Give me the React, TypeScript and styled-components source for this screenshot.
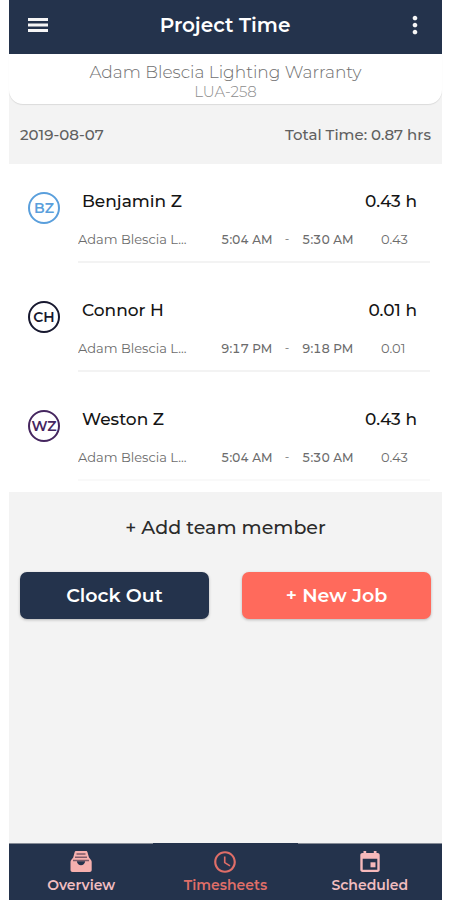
import React from "react";
import styled, { createGlobalStyle } from "styled-components";
import { MdAccessTime, MdMoreVert } from "react-icons/md";

const GlobalStyle = createGlobalStyle`
  * { box-sizing: border-box; }
  body {
    margin: 0;
    background: #ffffff;
    font-family: Montserrat, Inter, sans-serif;
    color: #141414;
  }
  button { font-family: inherit; cursor: pointer; }
  h1, h2, p, ul { margin: 0; padding: 0; font-weight: inherit; }
`;

const Screen = styled.div`
  display: flex;
  flex-direction: column;
  min-height: 100vh;
  margin: 0 8px 0 9px;
  background: #f3f3f3;
`;

const Header = styled.header`
  display: grid;
  grid-template-columns: 32px 1fr 38px;
  align-items: center;
  height: 54px;
  padding: 0 8px 4px 13px;
  background: #24334c;
  color: #ffffff;
`;

const IconButton = styled.button`
  display: flex;
  align-items: center;
  justify-content: center;
  height: 32px;
  padding: 0;
  border: 0;
  background: none;
  color: #f6f6f6;
`;

const Title = styled.h1`
  font-size: 20px;
  font-weight: 600;
  line-height: 24px;
  text-align: center;
`;

const ProjectBanner = styled.section`
  height: 50px;
  padding-top: 8px;
  border-radius: 0 0 14px 14px;
  background: #ffffff;
  box-shadow: 0 1px 1px rgba(0, 0, 0, 0.1);
  text-align: center;
`;

const BannerWrap = styled.div`
  background: linear-gradient(#ffffff 50%, #f3f3f3 50%);
`;

const ProjectName = styled.h2`
  font-size: 17px;
  font-weight: 300;
  line-height: 20px;
  color: #707070;
`;

const ProjectCode = styled.p`
  font-size: 15px;
  font-weight: 300;
  line-height: 20px;
  color: #8c8c8c;
`;

const Summary = styled.div`
  display: flex;
  align-items: center;
  justify-content: space-between;
  height: 60px;
  padding: 0 11px;
  font-size: 15px;
  font-weight: 500;
  color: #606060;
`;

const MemberList = styled.ul`
  padding-bottom: 1px;
  background: #ffffff;
  list-style: none;
`;

const MemberRow = styled.li`
  display: grid;
  grid-template-columns: 32px 1fr;
  column-gap: 18px;
  padding: 27px 12px 10px 19px;
`;

const Avatar = styled.div<{ $color: string }>`
  display: flex;
  align-items: center;
  justify-content: center;
  width: 32px;
  height: 32px;
  margin-top: 1px;
  border: 2px solid ${(p) => p.$color};
  border-radius: 50%;
  color: ${(p) => p.$color};
  font-size: 14px;
  font-weight: 600;
`;

const MemberHead = styled.div`
  display: flex;
  justify-content: space-between;
  padding: 0 13px 0 4px;
  font-size: 17px;
  font-weight: 500;
  line-height: 20px;
`;

const Entry = styled.div<{ $faint?: boolean }>`
  display: grid;
  grid-template-columns: 1fr 51px 30px 51px 77px;
  align-items: center;
  height: 52px;
  padding-top: 6px;
  border-bottom: 2px solid ${(p) => (p.$faint ? "#f9f9f9" : "#f3f3f3")};
  font-size: 12px;
  line-height: 16px;
  color: #6c6c6c;
  white-space: nowrap;
`;

const EntryProject = styled.span`
  width: 112px;
  overflow: hidden;
  font-size: 13px;
`;

const EntryTime = styled.time`
  padding-top: 2px;
  font-weight: 500;
  font-variant-numeric: tabular-nums;
  text-align: center;
`;

const EntryDash = styled.span`
  text-align: center;
`;

const EntryHours = styled.span`
  padding-left: 28px;
  font-size: 13px;
`;

const AddMember = styled.button`
  align-self: center;
  height: 70px;
  padding: 0 16px;
  border: 0;
  background: none;
  color: #2b2b2b;
  font-size: 19px;
  font-weight: 500;
`;

const Actions = styled.div`
  display: grid;
  grid-template-columns: 1fr 1fr;
  column-gap: 33px;
  padding: 10px 11px;
`;

const ActionButton = styled.button<{ $tone: "navy" | "coral" }>`
  height: 47px;
  border: 0;
  border-radius: 7px;
  background: ${(p) => (p.$tone === "navy" ? "#24334c" : "#ff6a5c")};
  box-shadow: 0 1px 3px rgba(0, 0, 0, 0.25);
  color: #ffffff;
  font-size: 19px;
  font-weight: 600;
`;

const TabBar = styled.nav`
  display: grid;
  grid-template-columns: repeat(3, 1fr);
  height: 57px;
  margin-top: auto;
  background: #24334c;
`;

const Tab = styled.a<{ $active?: boolean }>`
  display: flex;
  flex-direction: column;
  align-items: center;
  padding-top: 5px;
  border-top: 1px solid ${(p) => (p.$active ? "#24334c" : "#858b96")};
  color: ${(p) => (p.$active ? "#df6e68" : "#f1bdc0")};
  font-size: 14px;
  font-weight: 600;
  line-height: 20px;
  text-decoration: none;
`;

function MenuIcon() {
  return (
    <svg width="20" height="16" viewBox="0 0 20 16" aria-hidden="true">
      <path d="M0 2.500h20M0 8h20M0 13.500h20" stroke="currentColor" strokeWidth="2.800" />
    </svg>
  );
}

function FileTrayIcon() {
  return (
    <svg width="26" height="26" viewBox="0 0 26 26" aria-hidden="true">
      <path d="M8 2h10c.8 0 1.200.4 1.400 1.100l1.600 5.400 2 2.500c.5.700.7 1.300.7 2V21c0 1.200-.8 2-2 2H4.500c-1.200 0-2-.8-2-2v-8c0-.7.2-1.300.7-2l2-2.500 1.500-5.400C6.900 2.400 7.300 2 8 2z" fill="#f6b0ae" />
      <path d="M8.500 5h9M7 8.300h12M5 11.500h16" stroke="#7d5a68" strokeWidth="1.500" fill="none" />
      <path d="M8.800 12.200h8.400c-.5 2.600-2.100 4-4.200 4s-3.700-1.400-4.200-4z" fill="#24334c" />
    </svg>
  );
}

function CalendarIcon() {
  return (
    <svg width="26" height="26" viewBox="0 0 26 26" aria-hidden="true">
      <path
        fillRule="evenodd"
        d="M6.500 2h2.700v2h7.600V2h2.700v2h1c1.300 0 2.200.9 2.200 2.200v14.600c0 1.300-.9 2.200-2.200 2.200h-15c-1.300 0-2.200-.9-2.200-2.200V6.200C3.300 4.900 4.200 4 5.500 4h1V2zM5.700 9.700v11h14.600v-11H5.700z"
        fill="#f6b9bb"
      />
      <path d="M13.500 13.300h5v5h-5z" fill="#f6b9bb" />
    </svg>
  );
}

const members = [
  { initials: "BZ", name: "Benjamin Z", color: "#5a9fdc", start: "5:04 AM", end: "5:30 AM", hours: "0.43" },
  { initials: "CH", name: "Connor H", color: "#17182f", start: "9:17 PM", end: "9:18 PM", hours: "0.01" },
  { initials: "WZ", name: "Weston Z", color: "#45265f", start: "5:04 AM", end: "5:30 AM", hours: "0.43" },
];

export default function App() {
  return (
    <>
      <GlobalStyle />
      <Screen>
        <Header>
          <IconButton aria-label="Menu">
            <MenuIcon />
          </IconButton>
          <Title>Project Time</Title>
          <IconButton aria-label="More options">
            <MdMoreVert size={28} />
          </IconButton>
        </Header>
        <BannerWrap>
          <ProjectBanner>
            <ProjectName>Adam Blescia Lighting Warranty</ProjectName>
            <ProjectCode>LUA-258</ProjectCode>
          </ProjectBanner>
        </BannerWrap>
        <Summary>
          <time>2019-08-07</time>
          <span>Total Time: 0.87 hrs</span>
        </Summary>
        <MemberList>
          {members.map((m, i) => (
            <MemberRow key={m.initials}>
              <Avatar $color={m.color}>{m.initials}</Avatar>
              <div>
                <MemberHead>
                  <span>{m.name}</span>
                  <span>{m.hours} h</span>
                </MemberHead>
                <Entry $faint={i === members.length - 1}>
                  <EntryProject>Adam Blescia L...</EntryProject>
                  <EntryTime>{m.start}</EntryTime>
                  <EntryDash>-</EntryDash>
                  <EntryTime>{m.end}</EntryTime>
                  <EntryHours>{m.hours}</EntryHours>
                </Entry>
              </div>
            </MemberRow>
          ))}
        </MemberList>
        <AddMember>+ Add team member</AddMember>
        <Actions>
          <ActionButton $tone="navy">Clock Out</ActionButton>
          <ActionButton $tone="coral">+ New Job</ActionButton>
        </Actions>
        <TabBar>
          <Tab href="#overview">
            <FileTrayIcon />
            Overview
          </Tab>
          <Tab href="#timesheets" $active aria-current="page">
            <MdAccessTime size={26} />
            Timesheets
          </Tab>
          <Tab href="#scheduled">
            <CalendarIcon />
            Scheduled
          </Tab>
        </TabBar>
      </Screen>
    </>
  );
}
